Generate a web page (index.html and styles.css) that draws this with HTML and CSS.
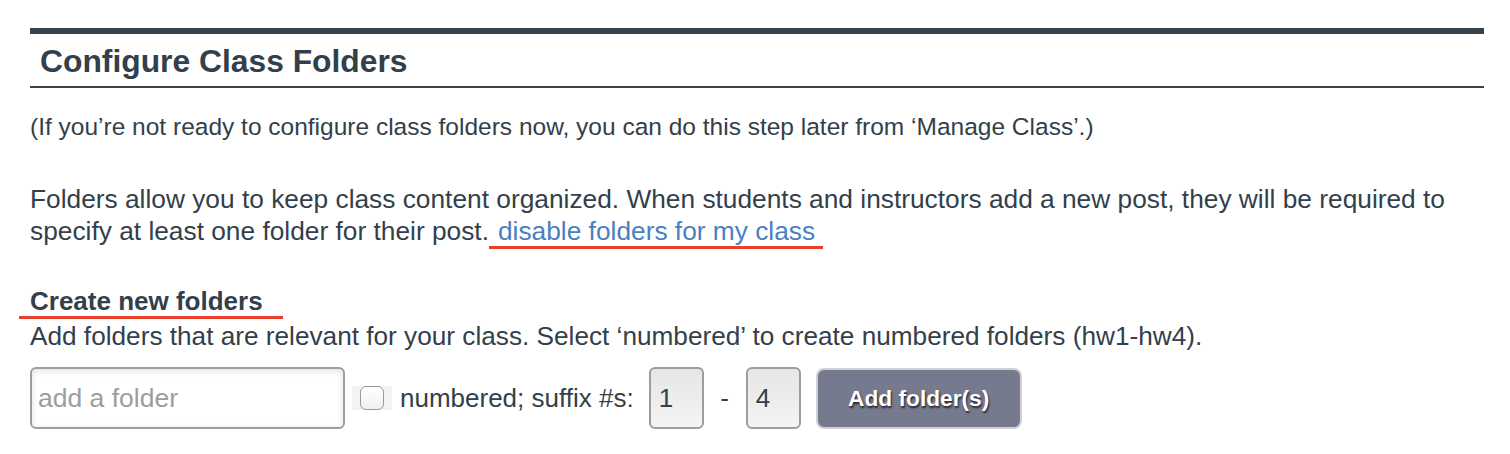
FILE: index.html
```html
<!DOCTYPE html>
<html lang="en">
<head>
    <meta charset="UTF-8">
    <title>Configure Class Folders</title>
    <link rel="stylesheet" href="styles.css">
</head>
<body>
    <div class="secao">
        <h2 class="titulo">Configure Class Folders</h2>
        <p class="nota">(If you’re not ready to configure class folders now, you can do this step later from ‘Manage Class’.)</p>
        <p class="texto">Folders allow you to keep class content organized. When students and instructors add a new post, they will be required to specify at least one folder for their post.<a href="#" class="marca marca-link">disable folders for my class</a></p>
        <h3 class="subtitulo"><span class="marca marca-sub">Create new folders</span></h3>
        <p class="ajuda">Add folders that are relevant for your class. Select ‘numbered’ to create numbered folders (hw1-hw4).</p>
        <div class="linha">
            <input type="text" class="campo" placeholder="add a folder">
            <span class="caixa"><input type="checkbox" id="numerado"></span>
            <label for="numerado" class="rotulo">numbered; suffix #s:</label>
            <input type="text" class="num" value="1">
            <span class="traco">-</span>
            <input type="text" class="num" value="4">
            <button class="botao">Add folder(s)</button>
        </div>
    </div>
</body>
</html>
```

FILE: styles.css
```css
body {
    margin: 0;
    font-family: "Liberation Sans", Arial, sans-serif;
    color: #333f4a;
    background-color: #fff;
}
.secao {
    margin: 28px 26px 0 30px;
    border-top: 6px solid #35424c;
}
.titulo {
    margin: 0;
    padding: 9px 10px 7px;
    font-size: 31.8px;
    line-height: 36px;
    border-bottom: 2px solid #35424c;
}
.nota {
    margin: 23px 0 0;
    font-size: 24.5px;
    line-height: 32px;
}
.texto {
    margin: 40px 0 0;
    font-size: 26.3px;
    line-height: 32px;
}
.texto a {
    color: #4a7fc1;
    text-decoration: none;
}
.marca {
    border-bottom: 3px solid #e8402a;
}
.marca-link {
    padding: 0 8px 0 9px;
}
.subtitulo {
    margin: 39px 0 0;
    font-size: 26px;
    line-height: 30px;
}
.marca-sub {
    margin-left: -11px;
    padding: 0 20px 0 11px;
}
.ajuda {
    margin: 4px 0 0;
    font-size: 26.2px;
    line-height: 32px;
}
.linha {
    display: flex;
    align-items: center;
    margin-top: 15px;
}
.campo {
    box-sizing: border-box;
    width: 315px;
    height: 62px;
    padding: 4px 6px;
    font-family: inherit;
    font-size: 26.5px;
    border: 2px solid #9a9da1;
    border-radius: 6px;
    box-shadow: inset 0 2px 6px rgba(0,0,0,0.12);
}
.campo::placeholder {
    color: #9d9d9d;
}
.caixa {
    display: flex;
    align-items: center;
    justify-content: center;
    width: 40px;
    height: 24px;
    margin-left: 7px;
    background-color: #f3f3f3;
}
.caixa input {
    appearance: none;
    width: 24px;
    height: 24px;
    margin: 0;
    border: 1px solid #9a9a9a;
    border-radius: 6px;
    background: linear-gradient(#fff, #f0f0f0);
}
.rotulo {
    margin: 0 15px 0 8px;
    font-size: 26px;
}
.num {
    box-sizing: border-box;
    width: 55px;
    height: 62px;
    padding: 0 0 0 8px;
    font-family: inherit;
    font-size: 26px;
    color: #333f4a;
    border: 2px solid #9a9da1;
    border-radius: 6px;
    background: linear-gradient(#e6e6e6, #f4f4f4);
}
.traco {
    width: 42px;
    text-align: center;
    font-size: 26px;
}
.botao {
    height: 61px;
    width: 206px;
    margin-left: 15px;
    font-family: inherit;
    font-size: 22.7px;
    font-weight: bold;
    color: #fff;
    text-shadow: 1px 2px 2px rgba(0,0,0,0.7);
    background-color: #767a8e;
    border: 2px solid #d2d2d6;
    border-radius: 8px;
    cursor: pointer;
}
```
